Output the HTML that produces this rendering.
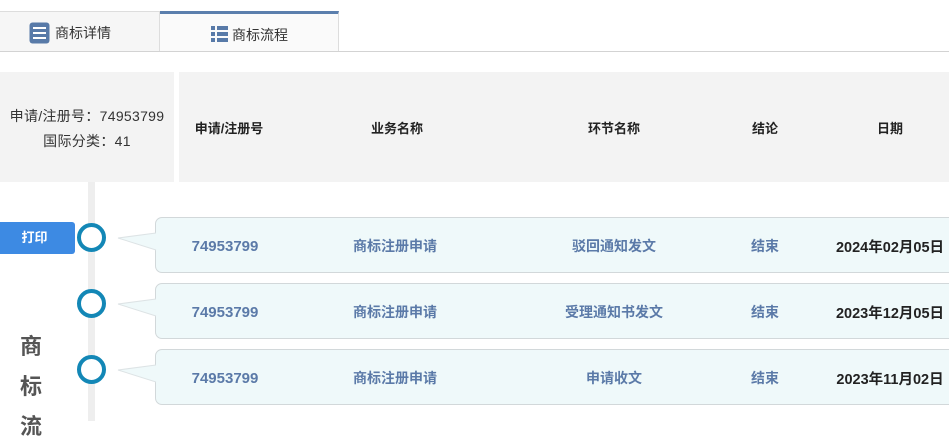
<!DOCTYPE html>
<html><head><meta charset="utf-8"><style>
*{margin:0;padding:0;box-sizing:border-box}
body{width:949px;height:421px;overflow:hidden;background:#fff;font-family:"Liberation Sans","Noto Sans CJK SC",sans-serif;position:relative}
.a{position:absolute}
.tab1{left:0;top:11px;width:160px;height:40px;background:#f6f6f6;border-top:1px solid #ddd;border-right:1px solid #ddd}
.tab2{left:160px;top:11px;width:179px;height:40px;background:#fafafa;border-top:3px solid #5b7fad;border-right:1px solid #ddd}
.hline{left:0;top:51px;width:949px;height:1px;background:#d3d3d3}
.tt{font-size:14px;color:#333}
.hdr{top:72px;height:110px;background:#f3f3f3}
.hc{top:118px;font-size:13px;font-weight:bold;color:#222;transform:translateX(-50%);white-space:nowrap}
.vline{left:88px;top:182px;width:7px;height:239px;background:#eee}
.circ{left:77px;width:29px;height:29px;border:4px solid #1387b6;border-radius:50%;background:#fff}
.bub{left:155px;width:810px;height:56px;background:#eff9fa;border:1px solid #d2d8da;border-radius:7px}
.c{font-size:14px;font-weight:bold;color:#5b7aa8;transform:translateX(-50%);white-space:nowrap}
.n{font-size:15px}
.d{color:#222;font-size:14.5px}
</style></head><body>
<div class="a tab1"></div>
<div class="a tab2"></div>
<div class="a hline"></div>
<svg class="a" style="left:29px;top:22px" width="21" height="22"><rect x="0.5" y="0.5" width="20" height="21" rx="3" fill="#587aa8"/><rect x="4" y="5" width="13" height="2" fill="#fff"/><rect x="4" y="10" width="13" height="2" fill="#fff"/><rect x="4" y="15" width="13" height="2" fill="#fff"/></svg>
<div class="a tt" style="left:55px;top:23px">商标详情</div>
<svg class="a" style="left:211px;top:26px" width="17" height="17" fill="#587aa8"><rect x="0" y="0" width="4" height="4"/><rect x="6" y="0" width="11" height="4"/><rect x="0" y="6" width="4" height="4"/><rect x="6" y="6" width="11" height="4"/><rect x="0" y="12" width="4" height="4"/><rect x="6" y="12" width="11" height="4"/></svg>
<div class="a tt" style="left:232px;top:25px">商标流程</div>

<div class="a hdr" style="left:0;width:174px"></div>
<div class="a hdr" style="left:179px;width:770px"></div>
<div class="a" style="left:0;width:174px;top:104px;font-size:14px;color:#333;text-align:center;line-height:25px;letter-spacing:0.3px">申请/注册号：74953799<br>国际分类：41</div>
<div class="a hc" style="left:229px">申请/注册号</div>
<div class="a hc" style="left:397px">业务名称</div>
<div class="a hc" style="left:614px">环节名称</div>
<div class="a hc" style="left:765px">结论</div>
<div class="a hc" style="left:890px">日期</div>

<div class="a vline"></div>
<div class="a" style="left:0;top:222px;width:75px;height:32px;background:#3d8ae3;border-radius:0 3px 3px 0;color:#fff;font-size:13px;font-weight:bold;line-height:32px;text-align:center;padding-right:6px">打印</div>
<div class="a" style="left:20px;top:327px;font-size:22px;font-weight:bold;color:#555;line-height:40px">商<br>标<br>流</div>

<div class="a bub" style="top:217px"></div>
<div class="a bub" style="top:283px"></div>
<div class="a bub" style="top:349px"></div>
<svg class="a" style="left:117px;top:225px" width="40" height="200"><g fill="#eff9fa" stroke="#dde3e5"><path d="M39 8 L1 13 L39 25"/><path d="M39 74 L1 79 L39 91"/><path d="M39 140 L1 145 L39 157"/></g></svg>
<div class="a circ" style="top:223px"></div>
<div class="a circ" style="top:289px"></div>
<div class="a circ" style="top:355px"></div>

<div class="a c n" style="left:225px;top:238px">74953799</div>
<div class="a c" style="left:395px;top:236px">商标注册申请</div>
<div class="a c" style="left:614px;top:236px">驳回通知发文</div>
<div class="a c" style="left:765px;top:236px">结束</div>
<div class="a c d" style="left:890px;top:236px">2024年02月05日</div>

<div class="a c n" style="left:225px;top:304px">74953799</div>
<div class="a c" style="left:395px;top:302px">商标注册申请</div>
<div class="a c" style="left:614px;top:302px">受理通知书发文</div>
<div class="a c" style="left:765px;top:302px">结束</div>
<div class="a c d" style="left:890px;top:302px">2023年12月05日</div>

<div class="a c n" style="left:225px;top:370px">74953799</div>
<div class="a c" style="left:395px;top:368px">商标注册申请</div>
<div class="a c" style="left:614px;top:368px">申请收文</div>
<div class="a c" style="left:765px;top:368px">结束</div>
<div class="a c d" style="left:890px;top:368px">2023年11月02日</div>
</body></html>
